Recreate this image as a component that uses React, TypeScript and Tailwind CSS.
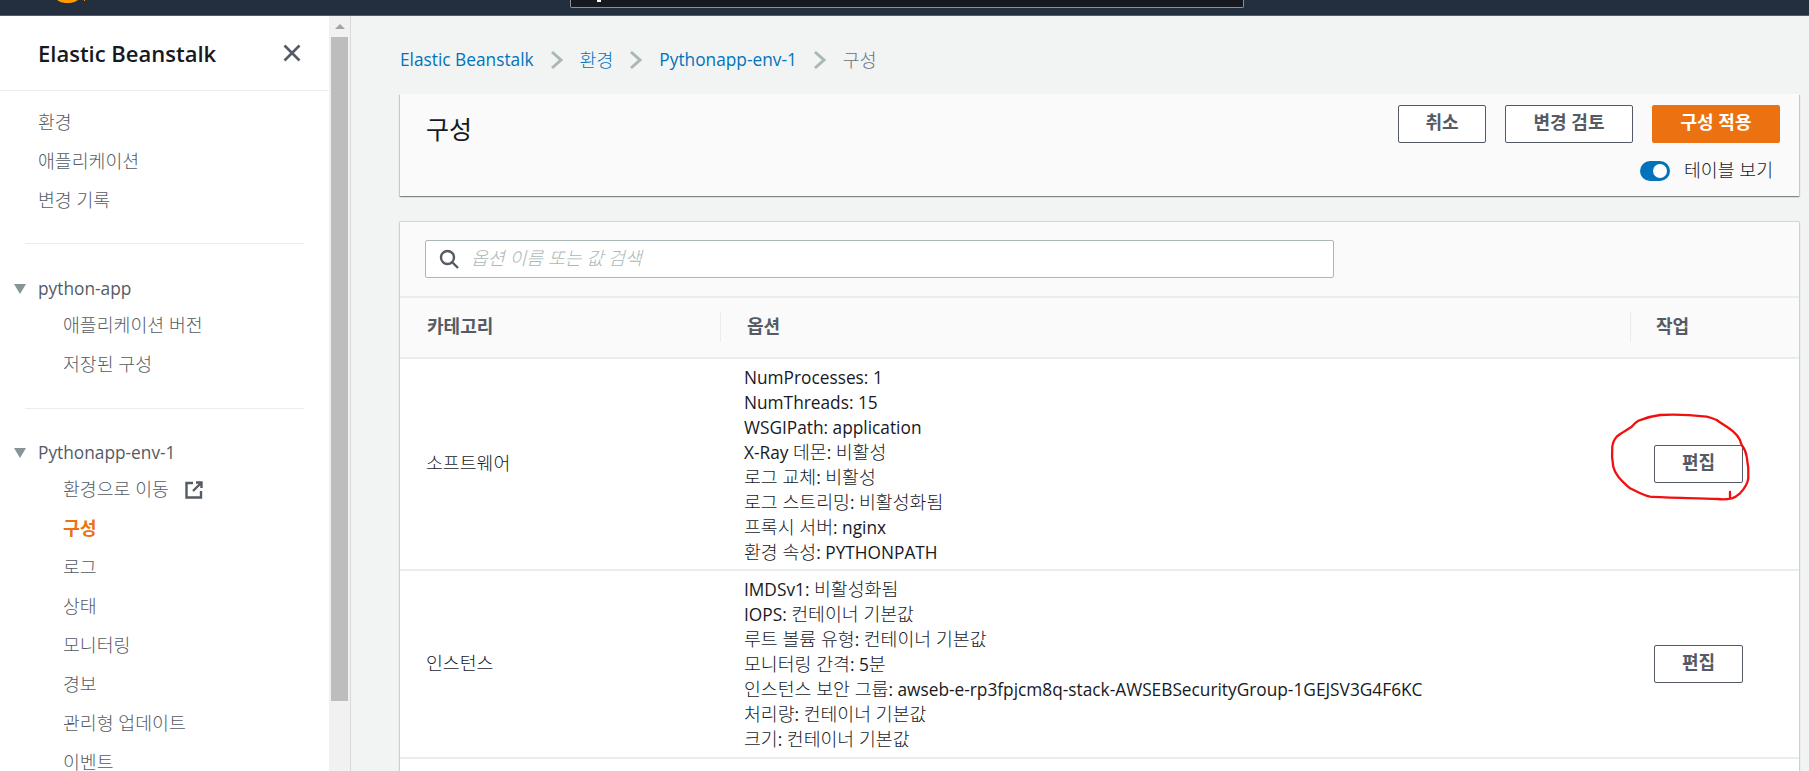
const FONT = "font-['Open_Sans','Noto_Sans_CJK_KR',sans-serif]";

// hangul runs sit a little larger than the latin text around them, and thinner unless bold
function K({ children, bold }: { children: string; bold?: boolean }) {
  const parts = children.split(/([가-힣]+(?: [가-힣]+)*)/);
  return (
    <>
      {parts.map((p, i) =>
        i % 2 === 1 ? (
          <span key={i} className={`text-[1.06em] leading-none ${bold ? 'font-bold' : 'font-light'}`}>{p}</span>
        ) : (
          p
        ),
      )}
    </>
  );
}

const Chevron = () => (
  <svg width="14" height="20" viewBox="0 0 14 20" fill="none" stroke="#aab7b8" strokeWidth="3">
    <path d="M2 2l9 8-9 8" />
  </svg>
);

const Caret = () => (
  <svg width="12" height="10" viewBox="0 0 12 10" className="absolute left-[14px] top-[12px]">
    <path d="M0 0h12L6 10z" fill="#879596" />
  </svg>
);

function NavItem({ label, active, children }: { label: string; active?: boolean; children?: React.ReactNode }) {
  return (
    <div className={`h-[39px] pt-[3px] pl-[63px] flex items-center gap-[16px] text-[17.3px] ${active ? 'text-[#ec7211] font-bold' : 'text-[#545b64]'}`}>
      <span><K bold={active}>{label}</K></span>
      {children}
    </div>
  );
}

function EditButton() {
  return (
    <button className="w-[89px] h-[38px] pb-[2px] bg-white border border-[#545b64] rounded-[2px] text-[17px] font-bold text-[#545b64]">
      <K bold>편집</K>
    </button>
  );
}

function Row({ name, lines, height }: { name: string; lines: string[]; height: string }) {
  return (
    <div className={`flex items-center border-b-2 border-[#eaeded] ${height}`}>
      <div className="w-[344px] pl-[26px] text-[17.3px] text-[#16191f]"><K>{name}</K></div>
      <div className="flex-1 pt-[1px] text-[17.3px] leading-[25px] text-[#16191f]">
        {lines.map(l => <div key={l}><K>{l}</K></div>)}
      </div>
      <div className="w-[145px]"><EditButton /></div>
    </div>
  );
}

export default function App() {
  return (
    <div className={`relative h-[771px] w-full overflow-hidden flex flex-col bg-[#f2f3f3] ${FONT}`}>
      <header className="h-[16px] shrink-0 bg-[#232f3e] border-b border-[#545b64] relative">
        <div className="absolute left-[53px] -top-[9px] w-[29px] h-[12px] rounded-b-full bg-[#ff9900]" />
        <div className="absolute left-[84px] top-0 w-[1px] h-[1px] bg-[#ff9900]" />
        <div className="absolute left-[570px] top-0 w-[674px] h-[8px] bg-[#16191f] border border-t-0 border-[#879596] rounded-b-[2px]">
          <div className="absolute left-[26px] top-0 w-[4px] h-[2px] bg-white" />
        </div>
      </header>

      <div className="flex flex-1 min-h-0">
        {/* side nav */}
        <aside className="w-[329px] shrink-0 bg-white">
          <div className="h-[75px] pl-[38px] pr-[28px] flex items-center justify-between border-b border-[#eaeded]">
            <span className="text-[22px] font-semibold text-[#16191f]">Elastic Beanstalk</span>
            <svg width="18" height="18" viewBox="0 0 18 18" stroke="#545b64" strokeWidth="2.6" fill="none">
              <path d="M1.5 1.5l15 15M16.5 1.5l-15 15" />
            </svg>
          </div>
          <div className="pt-[11px] pb-[24px]">
            {['환경', '애플리케이션', '변경 기록'].map(t => (
              <div key={t} className="h-[39px] pt-[3px] pl-[38px] flex items-center text-[17.3px] text-[#545b64]"><span><K>{t}</K></span></div>
            ))}
          </div>
          <div className="mx-[25px] border-t border-[#eaeded]" />
          <div className="pt-[28px] pb-[25px]">
            <div className="relative h-[33px] pl-[38px] text-[17.3px] text-[#545b64] flex items-center"><Caret />python-app</div>
            <NavItem label="애플리케이션 버전" />
            <NavItem label="저장된 구성" />
          </div>
          <div className="mx-[25px] border-t border-[#eaeded]" />
          <div className="pt-[27px]">
            <div className="relative h-[33px] pl-[38px] text-[17.3px] text-[#545b64] flex items-center"><Caret />Pythonapp-env-1</div>
            <NavItem label="환경으로 이동">
              <svg width="18" height="18" viewBox="0 0 18 18" fill="none" stroke="#545b64" strokeWidth="2.4">
                <path d="M8 2H1.5v14.5H16V10M11 1.5h5.5V7M16 2L8 10" />
              </svg>
            </NavItem>
            <NavItem label="구성" active />
            <NavItem label="로그" />
            <NavItem label="상태" />
            <NavItem label="모니터링" />
            <NavItem label="경보" />
            <NavItem label="관리형 업데이트" />
            <NavItem label="이벤트" />
          </div>
        </aside>

        {/* scrollbar */}
        <div className="w-[22px] shrink-0 bg-[#f1f1f1] border-r border-[#d5dbdb] px-[2px]">
          <div className="h-[21px] flex items-center justify-center">
            <div className="w-0 h-0 border-x-[5px] border-x-transparent border-b-[5px] border-b-[#a3a3a3]" />
          </div>
          <div className="h-[664px] bg-[#bdbdbd]" />
        </div>

        {/* main */}
        <main className="flex-1 min-w-0 pl-[49px] pr-[10px]">
          <div className="h-[78px] pt-[10px] flex items-center gap-[16px] text-[17.3px] leading-none">
            <span className="text-[#0073bb]">Elastic Beanstalk</span>
            <Chevron />
            <span className="text-[#0073bb]"><K>환경</K></span>
            <Chevron />
            <span className="text-[#0073bb]">Pythonapp-env-1</span>
            <Chevron />
            <span className="text-[#687078]"><K>구성</K></span>
          </div>

          <section className="h-[102px] bg-[#fafafa] shadow-[0_1px_1px_0_rgba(0,28,36,0.3),1px_1px_1px_0_rgba(0,28,36,0.15),-1px_1px_1px_0_rgba(0,28,36,0.15)] pl-[26px] pr-[19px] pt-[11px] flex justify-between">
            <h1 className="text-[25px] font-normal text-[#16191f] mt-[6px]">구성</h1>
            <div className="flex flex-col items-end">
              <div className="flex gap-[19px]">
                <button className="w-[88px] h-[38px] pb-[3px] bg-white border border-[#545b64] rounded-[2px] text-[17px] font-bold text-[#545b64]"><K bold>취소</K></button>
                <button className="w-[128px] h-[38px] pb-[3px] bg-white border border-[#545b64] rounded-[2px] text-[17px] font-bold text-[#545b64]"><K bold>변경 검토</K></button>
                <button className="w-[128px] h-[38px] pb-[3px] bg-[#ec7211] rounded-[2px] text-[17px] font-bold text-white"><K bold>구성 적용</K></button>
              </div>
              <div className="flex items-center gap-[14px] mt-[18px] h-[20px] pr-[7px]">
                <div className="w-[30px] h-[20px] rounded-full bg-[#0073bb] flex items-center justify-end pr-[3px]">
                  <div className="w-[14px] h-[14px] rounded-full bg-white" />
                </div>
                <span className="text-[17.3px] text-[#16191f]"><K>테이블 보기</K></span>
              </div>
            </div>
          </section>

          <section className="mt-[26px] bg-white shadow-[1px_0_1px_0_rgba(0,28,36,0.15),-1px_0_1px_0_rgba(0,28,36,0.15),0_-1px_1px_0_rgba(0,28,36,0.08)]">
            <div className="h-[76px] bg-[#fafafa] border-b-2 border-[#eaeded] pl-[25px] pt-[18px]">
              <div className="w-[909px] h-[38px] bg-white border border-[#aab7b8] rounded-[2px] flex items-center pl-[13px] gap-[12px]">
                <svg width="20" height="20" viewBox="0 0 20 20" fill="none" stroke="#545b64" strokeWidth="2.4">
                  <circle cx="8.5" cy="8.5" r="6.5" />
                  <path d="M13 13l6 6" />
                </svg>
                <span className="text-[17.3px] italic text-[#aab7b8]"><K>옵션 이름 또는 값 검색</K></span>
              </div>
            </div>
            <div className="h-[61px] pb-[2px] bg-[#fafafa] border-b-2 border-[#eaeded] flex items-center text-[17px] font-bold text-[#545b64]">
              <div className="w-[320px] pl-[27px] h-[30px] flex items-center"><K bold>카테고리</K></div>
              <div className="flex-1 border-l border-[#eaeded] pl-[26px] h-[30px] flex items-center"><K bold>옵션</K></div>
              <div className="w-[169px] border-l border-[#eaeded] pl-[25px] h-[30px] flex items-center"><K bold>작업</K></div>
            </div>
            <Row
              name="소프트웨어"
              height="h-[212px]"
              lines={[
                'NumProcesses: 1',
                'NumThreads: 15',
                'WSGIPath: application',
                'X-Ray 데몬: 비활성',
                '로그 교체: 비활성',
                '로그 스트리밍: 비활성화됨',
                '프록시 서버: nginx',
                '환경 속성: PYTHONPATH',
              ]}
            />
            <Row
              name="인스턴스"
              height="h-[188px]"
              lines={[
                'IMDSv1: 비활성화됨',
                'IOPS: 컨테이너 기본값',
                '루트 볼륨 유형: 컨테이너 기본값',
                '모니터링 간격: 5분',
                '인스턴스 보안 그룹: awseb-e-rp3fpjcm8q-stack-AWSEBSecurityGroup-1GEJSV3G4F6KC',
                '처리량: 컨테이너 기본값',
                '크기: 컨테이너 기본값',
              ]}
            />
            <div className="pl-[344px] pt-[7px] text-[17.3px] leading-[25px] text-[#16191f]">AMI ID: ami-0f5000d0b8</div>
          </section>
        </main>
      </div>

      {/* red pen mark on the screenshot */}
      <svg className="absolute left-[1600px] top-[405px]" width="160" height="110" viewBox="0 0 160 110" fill="none" stroke="#f01010" strokeWidth="2.3" strokeLinejoin="round" strokeLinecap="round">
        <path d="M130 87v5M118 94C95 93 68 93 50 91.7 42 90 36 86 30 83.3 25 79 21 75 18.3 71.7 15.5 68 14 65 13.3 61.7 12 55 11.8 47 12.3 41.7 13 37 14.5 34 16.7 31.7 21 28 27 25 31.7 21.7 34 19 36 17 38.3 15.7 45 13 52 11 60 10 75 9 92 10 106.7 11.7 110 12.5 113 13.5 116.7 15 122 19 128 22 133.3 26.7 136 29 138.5 32 140 35 140.5 37 141 38.5 141.7 40 144 43 146 47 146.7 51.7 148 58 148.8 66 148.3 73.3 147.5 79 144 84 140 88.3 137 91 134.5 92.5 131.7 93.3 127 94.3 122 94.5 118 94" />
      </svg>
    </div>
  );
}
